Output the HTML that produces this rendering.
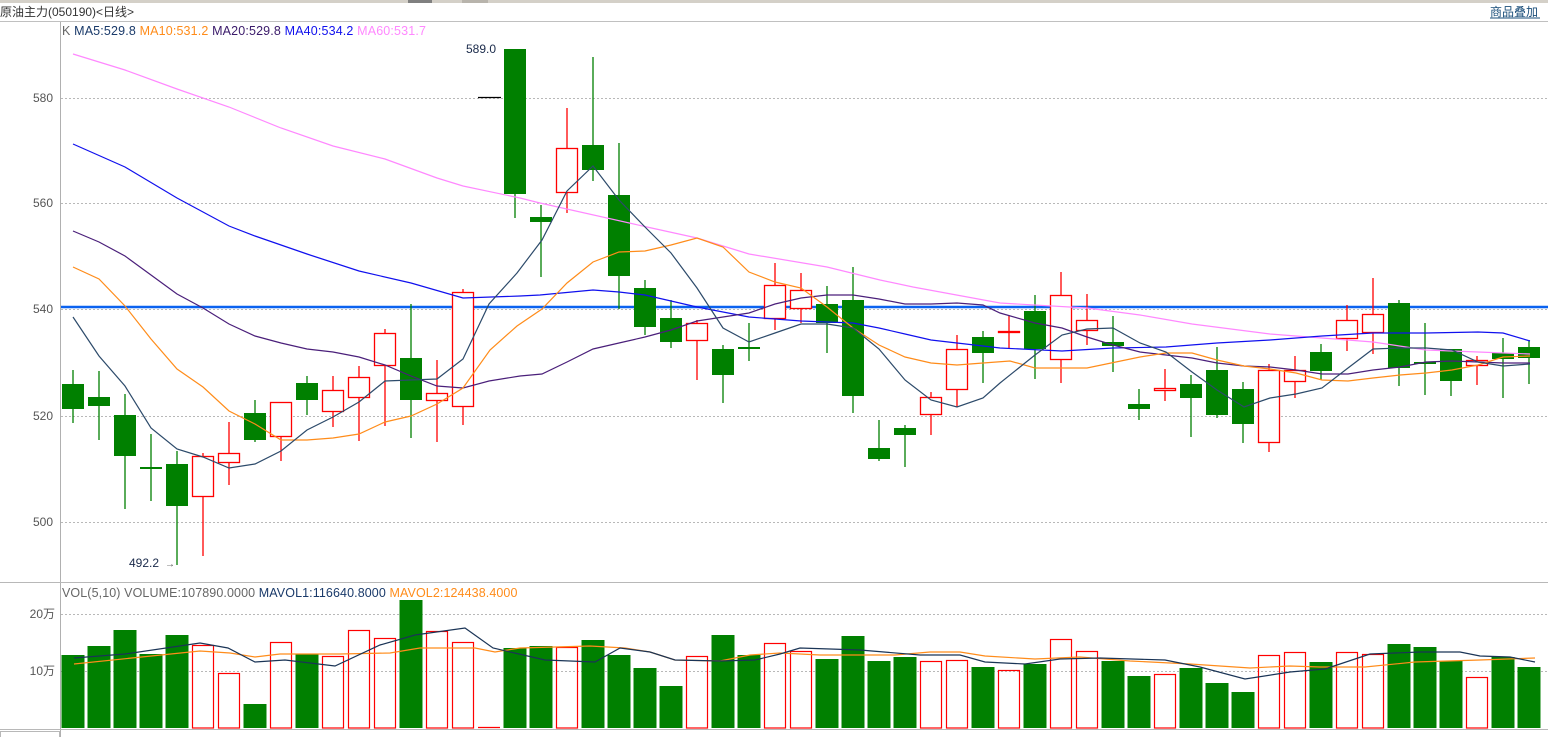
<!DOCTYPE html>
<html><head><meta charset="utf-8"><style>
html,body{margin:0;padding:0;background:#fff;width:1548px;height:737px;overflow:hidden;font-family:"Liberation Sans","Noto Sans CJK SC",sans-serif}
svg{position:absolute;left:0;top:0}
</style></head><body>
<svg id="s" width="1548" height="737" xmlns="http://www.w3.org/2000/svg" font-family="Liberation Sans, Noto Sans CJK SC, sans-serif">
<rect x="0" y="0" width="1548" height="3" fill="#d4d0c8"/>
<rect x="408" y="0" width="24" height="3" fill="#808080"/>
<rect x="462" y="0" width="26" height="3" fill="#b8b4ac"/>
<text x="0" y="16" font-size="12" fill="#333">原油主力(050190)&lt;日线&gt;</text>
<text x="1490" y="16" font-size="12" fill="#1a4e7a">商品叠加</text>
<line x1="1490" y1="18" x2="1540" y2="18" stroke="#1a4e7a" stroke-width="1"/>
<line x1="0" y1="21.5" x2="1548" y2="21.5" stroke="#c0c0c0"/>
<line x1="60.5" y1="22" x2="60.5" y2="737" stroke="#b0b0b0"/>
<g stroke="#b8b8b8" stroke-dasharray="2,2" stroke-width="1">
<line x1="61" y1="98.5" x2="1548" y2="98.5"/><line x1="61" y1="203.5" x2="1548" y2="203.5"/>
<line x1="61" y1="309.5" x2="1548" y2="309.5"/><line x1="61" y1="416.5" x2="1548" y2="416.5"/>
<line x1="61" y1="522.5" x2="1548" y2="522.5"/><line x1="61" y1="614.5" x2="1548" y2="614.5"/>
<line x1="61" y1="671.5" x2="1548" y2="671.5"/>
</g>
<g font-size="12" fill="#555" text-anchor="end">
<text x="53" y="102">580</text><text x="53" y="207">560</text><text x="53" y="313">540</text>
<text x="53" y="420">520</text><text x="53" y="526">500</text>
<text x="55" y="618">20万</text><text x="55" y="675">10万</text>
</g>
<line x1="0" y1="582.5" x2="1548" y2="582.5" stroke="#b8b8b8"/>
<line x1="0" y1="729.5" x2="1548" y2="729.5" stroke="#b8b8b8"/>
<rect x="0.5" y="731.5" width="59" height="8" fill="none" stroke="#b8b8b8"/>
<text x="62" y="35" font-size="12.5" letter-spacing="0.15"><tspan fill="#666">K  </tspan><tspan fill="#1a3a6a"> MA5:529.8 </tspan><tspan fill="#ff8c1a">MA10:531.2 </tspan><tspan fill="#3a1a6a">MA20:529.8 </tspan><tspan fill="#1010ee">MA40:534.2 </tspan><tspan fill="#ff88ff">MA60:531.7</tspan></text>
<text x="62" y="597" font-size="12.5" letter-spacing="0.1"><tspan fill="#666">VOL(5,10) VOLUME:107890.0000 </tspan><tspan fill="#1a3a6a">MAVOL1:116640.8000 </tspan><tspan fill="#ff8c1a">MAVOL2:124438.4000</tspan></text>
<text x="466" y="53" font-size="12" fill="#1a2a4a">589.0</text>
<text x="503" y="53" font-size="10" fill="#555">→</text>
<text x="129" y="567" font-size="12" fill="#1a2a4a">492.2</text>
<text x="165" y="567" font-size="10" fill="#555">→</text>
<line x1="478" y1="97.5" x2="501" y2="97.5" stroke="#000" stroke-width="1.2"/>
<line x1="61" y1="307" x2="1548" y2="307" stroke="#0a62f0" stroke-width="2.5"/>
<g id="ma" fill="none" stroke-width="1.2"></g>
<g id="c"></g>
<g id="v"></g>
</svg>
<script>
var NS="http://www.w3.org/2000/svg";
function el(p,t,a){var e=document.createElementNS(NS,t);for(var k in a)e.setAttribute(k,a[k]);p.appendChild(e);return e;}
var C=[
['g',384,409,370,423],['g',397,406,371,440],['g',415,456,394,509],['g',467,469,434,501],['g',464,506,451,565],
['r',456,497,453,556],['r',453,463,422,485],['g',413,440,400,442],['r',402,437,402,461],['g',383,400,376,415],
['r',390,412,376,427],['r',377,398,366,441],['r',333,366,329,426],['g',358,400,304,438],['r',393,401,360,442],
['r',292,407,289,425],['n'],['g',49,194,49,218],['g',217,222,205,277],['r',148,193,108,213],
['g',145,170,57,181],['g',195,276,143,309],['g',288,327,280,335],['g',318,342,300,348],['r',323,341,320,380],
['g',349,375,345,403],['g',347,349,323,361],['r',285,319,263,330],['r',290,309,273,323],['g',304,323,286,353],
['g',300,396,267,413],['g',448,459,420,461],['g',428,435,425,467],['r',397,415,392,435],['r',349,390,335,407],
['g',337,353,331,383],['r',331,333,315,349],['g',311,349,295,379],['r',295,360,272,383],['r',320,331,294,345],
['g',342,346,316,372],['g',404,409,389,420],['r',388,391,369,401],['g',384,398,375,437],['g',370,415,347,418],
['g',389,424,382,443],['r',370,443,364,452],['r',370,382,356,398],['g',352,371,344,380],['r',320,339,305,351],
['r',314,333,278,354],['g',303,368,300,386],['g',362,364,323,395],['g',349,381,349,396],['r',360,366,356,385],
['g',353,359,338,398],['g',347,358,340,384]];
var V=[655,646,630,654,635,645,673,704,642,654,656,630,638,600,631,642,728,648,646,647,640,655,668,686,656,635,655,643,651,659,636,661,657,661,660,667,670,664,639,651,661,676,674,668,683,692,655,652,662,652,654,644,647,661,677,657,667];
var G="#008000",R="#ff0000";
var cg=document.getElementById('c'),vg=document.getElementById('v');
for(var i=0;i<C.length;i++){
 var x=73+26*i,d=C[i];
 if(d[0]!='n'){
  var bt=d[1],bb=Math.max(d[2],d[1]+2);
  if(d[0]=='g'){
   el(cg,'line',{x1:x,y1:d[3],x2:x,y2:d[4],stroke:G,'stroke-width':1.3});
   el(cg,'rect',{x:x-11,y:bt,width:22,height:bb-bt,fill:G});
  }else{
   el(cg,'line',{x1:x,y1:d[3],x2:x,y2:bt,stroke:R,'stroke-width':1.3});
   el(cg,'line',{x1:x,y1:bb,x2:x,y2:d[4],stroke:R,'stroke-width':1.3});
   el(cg,'rect',{x:x-10.5,y:bt+0.5,width:21,height:Math.max(bb-bt-1,1),fill:'#fff',stroke:R,'stroke-width':1.3});
  }
 }
 var t=V[i],vc=C[i][0];
 if(vc=='g')el(vg,'rect',{x:x-11.5,y:t,width:23,height:728-t,fill:G});
 else if(vc=='r')el(vg,'rect',{x:x-10.5,y:t+0.5,width:21,height:728-t-0.5,fill:'none',stroke:R,'stroke-width':1.2});
 else el(vg,'line',{x1:x-11,y1:727.5,x2:x+11,y2:727.5,stroke:R,'stroke-width':1.2});
}
var L={
"#ff88ff":"73,54 125,70 177,89 229,107 281,128 333,146 385,159 437,178 463,186 520,198 540,203 647,227 697,238 749,254 827,267 880,280 913,287 1000,303 1087,308 1140,315 1192,324 1270,334 1322,338 1373,342 1426,350 1478,352 1530,354",
"#1010ee":"73,144 125,167 177,198 229,226 255,236 307,254 359,271 411,283 463,298 520,296 540,295 593,290 619,292 645,295 671,301 697,307 723,312 749,317 775,319 801,321 827,322 853,323 879,328 905,334 931,340 957,343 983,346 1000,348 1062,351 1113,348 1166,347 1217,343 1270,340 1322,336 1373,333 1426,333 1478,332 1503,333 1530,341",
"#4a1f7a":"73,231 99,242 125,256 151,275 177,294 203,308 229,324 255,336 281,343 307,349 333,352 359,357 385,365 411,376 437,386 463,388 489,381 520,376 542,374 567,362 593,349 619,343 645,337 671,330 697,321 723,317 749,313 775,304 801,298 827,295 853,295 879,299 905,304 931,304 957,303 983,305 1000,313 1035,323 1062,328 1087,337 1113,345 1140,352 1166,355 1192,358 1217,363 1244,366 1270,367 1296,370 1322,374 1348,374 1373,370 1400,367 1426,362 1452,361 1478,362 1503,363 1530,363",
"#ff8c1a":"73,267 99,279 125,306 151,339 177,369 203,387 229,411 255,424 281,440 307,440 333,438 359,434 385,422 411,416 437,404 463,388 490,350 517,326 542,309 567,283 593,262 619,252 645,251 671,245 697,238 723,247 749,272 775,282 801,288 827,307 853,328 879,345 905,357 931,363 957,365 983,363 1010,361 1035,368 1087,368 1140,357 1166,353 1192,353 1217,360 1244,366 1270,369 1296,373 1322,380 1348,381 1373,378 1400,375 1426,373 1452,370 1478,365 1503,357 1530,356",
"#2c4a6a":"73,317 99,356 125,386 151,428 177,449 203,457 229,468 255,464 281,451 307,430 333,417 359,402 385,381 411,380 437,379 463,359 489,304 517,273 542,240 567,191 593,166 619,200 645,227 671,253 697,288 723,328 749,342 775,333 801,324 827,324 853,328 879,349 905,380 931,400 957,407 983,398 1000,383 1035,355 1062,335 1087,329 1113,328 1140,343 1166,352 1192,372 1217,390 1244,407 1270,398 1296,394 1322,388 1348,368 1373,349 1400,348 1426,348 1452,350 1478,362 1503,366 1530,364",
"#ff8c1b":"74,664 200,651 230,653 255,657 280,654 340,654 390,653 420,648 475,648 495,652 520,648 590,646 625,648 650,652 675,660 720,661 750,655 780,653 820,655 895,655 930,652 960,652 985,656 1035,659 1080,657 1130,661 1190,664 1250,668 1290,666 1320,667 1365,667 1415,662 1480,660 1535,658",
"#1a3456":"74,658 125,654 200,643 228,648 255,662 285,660 335,666 380,645 415,635 465,628 493,648 545,660 595,662 620,648 650,652 675,660 720,661 755,660 780,654 800,648 860,650 920,655 960,655 985,662 1025,664 1060,659 1100,658 1165,660 1200,667 1245,679 1290,672 1325,669 1370,654 1420,652 1460,652 1480,656 1510,657 1535,662"};
var mg=document.getElementById('ma');
for(var k in L)el(mg,'polyline',{points:L[k],stroke:k});
document.getElementById('s').insertBefore(mg,vg.nextSibling);
document.getElementById('s').insertBefore(cg,mg);
</script>
</body></html>
